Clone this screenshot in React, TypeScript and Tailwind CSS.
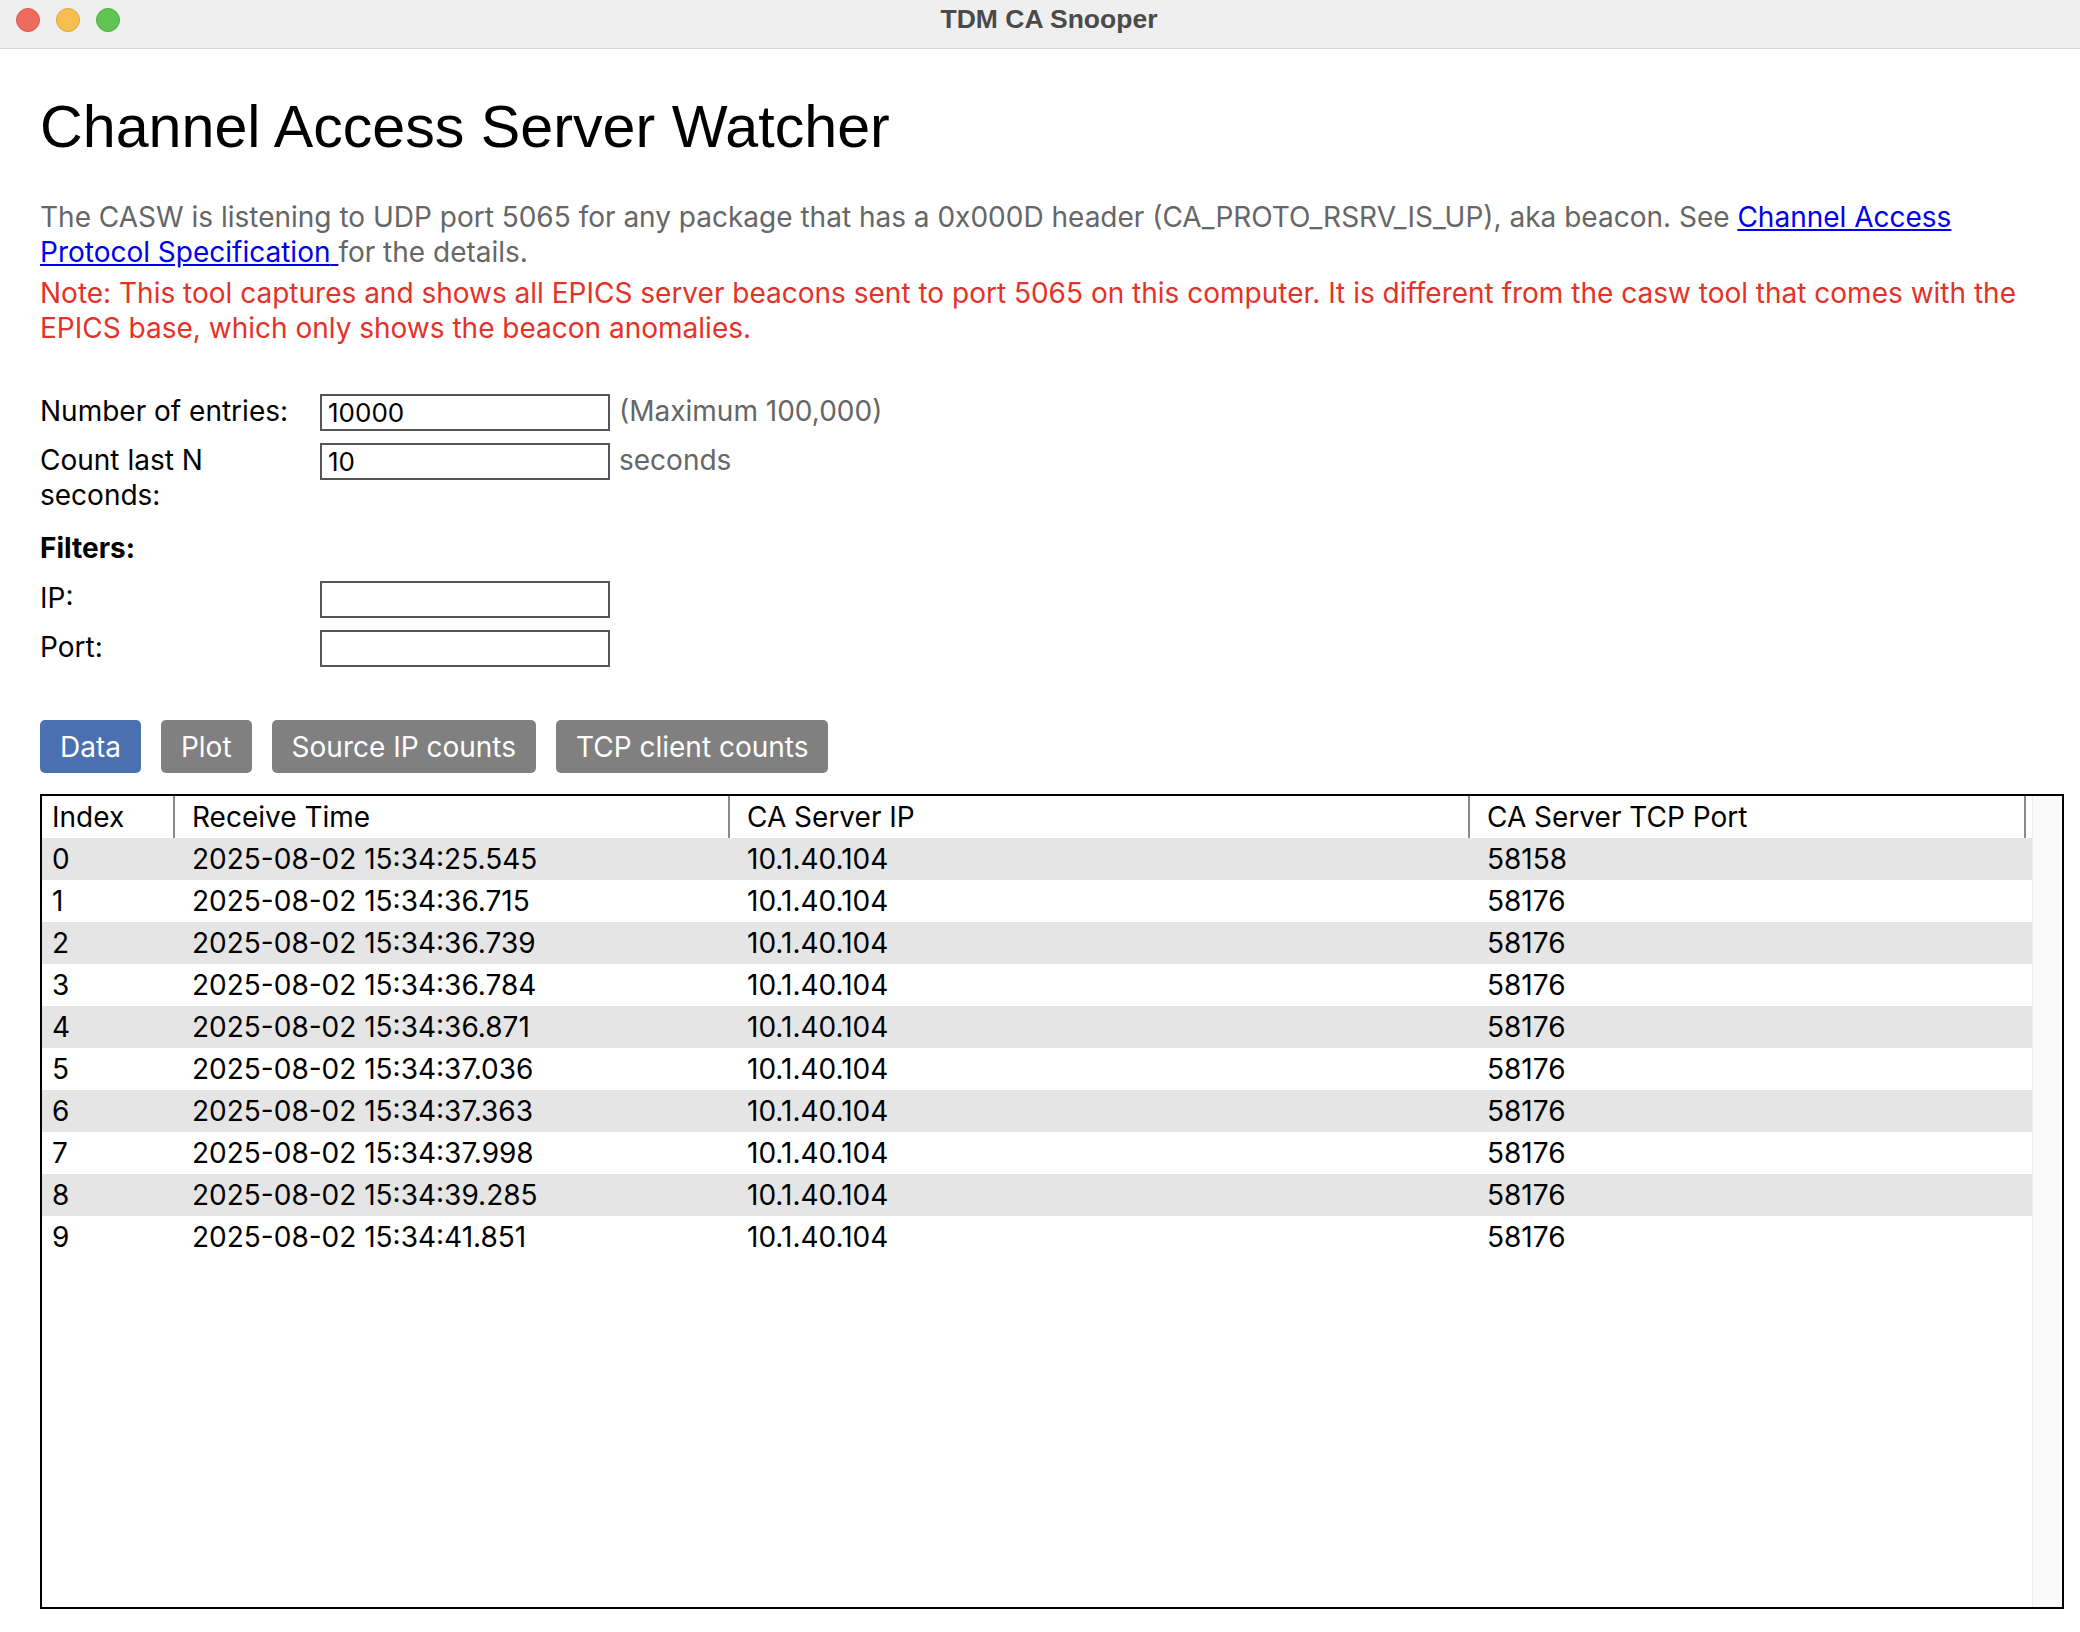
import React from "react";

const rows = [
  ["0", "2025-08-02 15:34:25.545", "10.1.40.104", "58158"],
  ["1", "2025-08-02 15:34:36.715", "10.1.40.104", "58176"],
  ["2", "2025-08-02 15:34:36.739", "10.1.40.104", "58176"],
  ["3", "2025-08-02 15:34:36.784", "10.1.40.104", "58176"],
  ["4", "2025-08-02 15:34:36.871", "10.1.40.104", "58176"],
  ["5", "2025-08-02 15:34:37.036", "10.1.40.104", "58176"],
  ["6", "2025-08-02 15:34:37.363", "10.1.40.104", "58176"],
  ["7", "2025-08-02 15:34:37.998", "10.1.40.104", "58176"],
  ["8", "2025-08-02 15:34:39.285", "10.1.40.104", "58176"],
  ["9", "2025-08-02 15:34:41.851", "10.1.40.104", "58176"],
];

const headers = ["Index", "Receive Time", "CA Server IP", "CA Server TCP Port"];
const colW = ["w-[133px] pl-[10px]", "w-[555px] pl-[17px]", "w-[740px] pl-[17px]", "w-[556px] pl-[17px]"];

function FormRow({ label, value, hint }: { label: string; value: string; hint?: string }) {
  return (
    <div className="flex items-start">
      <div className="w-[272px] mr-[8px] leading-[35px]">{label}</div>
      <input
        readOnly
        value={value}
        className="w-[290px] h-[37px] border-2 border-[#555] px-[6px] text-[26px] text-black outline-none"
      />
      {hint && <span className="ml-[9px] leading-[35px] text-[#666]">{hint}</span>}
    </div>
  );
}

export default function App() {
  return (
    <div className="min-h-[1632px] bg-white text-black font-['Inter',sans-serif] text-[28px]">
      {/* Fenster-Titelleiste */}
      <div className="relative h-[49px] bg-[#efefef] border-b border-[#d6d6d6] flex items-start justify-center">
        <div className="absolute left-[16px] top-[8px] flex gap-[16px]">
          <span className="w-[24px] h-[24px] rounded-full bg-[#ee6a5f] border border-[#d65a50]" />
          <span className="w-[24px] h-[24px] rounded-full bg-[#f5be4f] border border-[#dba63f]" />
          <span className="w-[24px] h-[24px] rounded-full bg-[#61c554] border border-[#52ad47]" />
        </div>
        <span className="ml-[18px] mt-[3px] leading-[32px] text-[26.5px] font-bold text-[#4a4a4a] font-['Liberation_Sans',sans-serif]">
          TDM CA Snooper
        </span>
      </div>

      <div className="pl-[40px] pr-[16px]">
        <h1 className="mt-[48px] text-[59.2px] leading-none font-['Liberation_Sans',Arial,sans-serif] font-normal">
          Channel Access Server Watcher
        </h1>

        <p className="mt-[44px] leading-[35px] text-[#666]">
          The CASW is listening to UDP port 5065 for any package that has a 0x000D header (CA_PROTO_RSRV_IS_UP), aka
          beacon. See{" "}
          <a href="#" className="text-[#0000ee] underline">
            Channel Access Protocol Specification{" "}
          </a>
          for the details.
        </p>
        <p className="mt-[6px] leading-[35px] text-[#e53228]">
          Note: This tool captures and shows all EPICS server beacons sent to port 5065 on this computer. It is
          different from the casw tool that comes with the EPICS base, which only shows the beacon anomalies.
        </p>

        <div className="mt-[48px] flex flex-col gap-[12px]">
          <FormRow label="Number of entries:" value="10000" hint="(Maximum 100,000)" />
          <FormRow label="Count last N seconds:" value="10" hint="seconds" />
        </div>
        <div className="mt-[18px] font-bold leading-[35px]">Filters:</div>
        <div className="mt-[15px] flex flex-col gap-[12px]">
          <FormRow label="IP:" value="" />
          <FormRow label="Port:" value="" />
        </div>

        <div className="mt-[53px] flex gap-[20px] text-white">
          <button className="h-[53px] px-[20px] rounded-[5px] bg-[#4a70b0]">Data</button>
          <button className="h-[53px] px-[20px] rounded-[5px] bg-[#808080]">Plot</button>
          <button className="h-[53px] px-[20px] rounded-[5px] bg-[#808080]">Source IP counts</button>
          <button className="h-[53px] px-[20px] rounded-[5px] bg-[#808080]">TCP client counts</button>
        </div>

        <div className="mt-[21px] h-[815px] border-2 border-black flex">
          <div className="flex-1 flex flex-col">
            <div className="flex h-[42px] items-center">
              {headers.map((h, i) => (
                <div key={h} className={`${colW[i]} h-full flex items-center border-r-2 border-[#8a8a8a]`}>
                  {h}
                </div>
              ))}
            </div>
            {rows.map((r, ri) => (
              <div key={ri} className={`flex h-[42px] items-center ${ri % 2 === 0 ? "bg-[#e5e5e5]" : "bg-white"}`}>
                {r.map((c, i) => (
                  <div key={i} className={colW[i]}>
                    {c}
                  </div>
                ))}
              </div>
            ))}
          </div>
          <div className="w-[30px] bg-[#fafafa] border-l border-[#ececec]" />
        </div>
      </div>
    </div>
  );
}
